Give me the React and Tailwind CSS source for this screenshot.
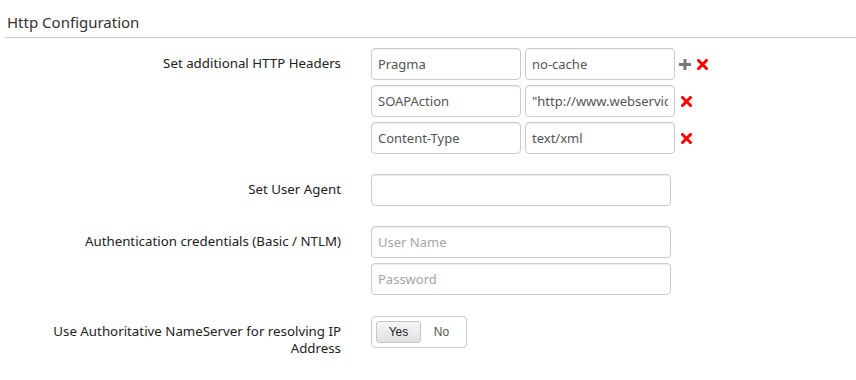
function PlusIcon() {
  return (
    <svg width="12" height="11" viewBox="0 0 12 11" className="shrink-0">
      <rect x="0" y="4" width="12" height="3" fill="#777" />
      <rect x="4.5" y="0" width="3" height="11" fill="#777" />
    </svg>
  );
}

function XIcon() {
  return (
    <svg width="11" height="11" viewBox="0 0 11 11" className="shrink-0">
      <path d="M1.5 1.5 L9.5 9.5 M9.5 1.5 L1.5 9.5" stroke="#ff0000" strokeWidth="3" strokeLinecap="square" />
    </svg>
  );
}

function TextInput({ value, placeholder, w = "w-[150px]" }) {
  return (
    <input
      readOnly
      defaultValue={value}
      placeholder={placeholder}
      className={`${w} h-[32px] shrink-0 rounded-[4px] border border-[#ccc] bg-white pl-[6px] pr-[6px] text-[13px] text-[#555] shadow-[inset_0_1px_1px_rgba(0,0,0,0.075)] outline-none placeholder:text-[#a5a5a5] font-['Noto_Sans',sans-serif]`}
    />
  );
}

function Row({ label, children, className = "" }) {
  return (
    <div className={`flex gap-[30px] ${className}`}>
      <div className="ml-[46px] w-[295px] shrink-0 pt-[7px] text-right text-[13.3px] leading-[17px] text-[#222]">
        {label}
      </div>
      <div className="flex flex-col gap-[5px]">{children}</div>
    </div>
  );
}

export default function App() {
  const headers = [
    ["Pragma", "no-cache", true],
    ["SOAPAction", "\"http://www.webservicex.net/GetWeather\"", false],
    ["Content-Type", "text/xml", false],
  ];
  return (
    <div className="min-h-[380px] w-[856px] bg-white font-['Noto_Sans',sans-serif] text-[#333]">
      <div className="ml-[5px] border-b border-[#ccc] pb-[5px] pl-[2px] pt-[12px] text-[15px] leading-[20px] text-[#333]">
        Http Configuration
      </div>
      <Row label="Set additional HTTP Headers" className="mt-[10px]">
        {headers.map(([k, v, plus]) => (
          <div key={k} className="flex items-center">
            <TextInput value={k} />
            <div className="ml-[4px]">
              <TextInput value={v} />
            </div>
            {plus ? (
              <div className="ml-[4px] flex items-center gap-[6px]">
                <PlusIcon />
                <XIcon />
              </div>
            ) : (
              <div className="ml-[6px] flex items-center">
                <XIcon />
              </div>
            )}
          </div>
        ))}
      </Row>
      <Row label="Set User Agent" className="mt-[20px]">
        <TextInput value="" w="w-[300px]" />
      </Row>
      <Row label="Authentication credentials (Basic / NTLM)" className="mt-[20px]">
        <TextInput placeholder="User Name" w="w-[300px]" />
        <TextInput placeholder="Password" w="w-[300px]" />
      </Row>
      <Row label="Use Authoritative NameServer for resolving IP Address" className="mt-[21px]">
        <div className="flex w-[96px] rounded-[4px] border border-[#ccc] p-[4px] font-['Liberation_Sans',Arial,sans-serif] text-[12px]">
          <div className="flex h-[22px] w-[45px] items-center justify-center rounded-[3px] border border-[#c6c6c6] bg-gradient-to-b from-[#f6f6f6] to-[#e1e1e1] text-[#222]">
            Yes
          </div>
          <div className="flex h-[22px] flex-1 items-center justify-center text-[#555]">No</div>
        </div>
      </Row>
    </div>
  );
}
